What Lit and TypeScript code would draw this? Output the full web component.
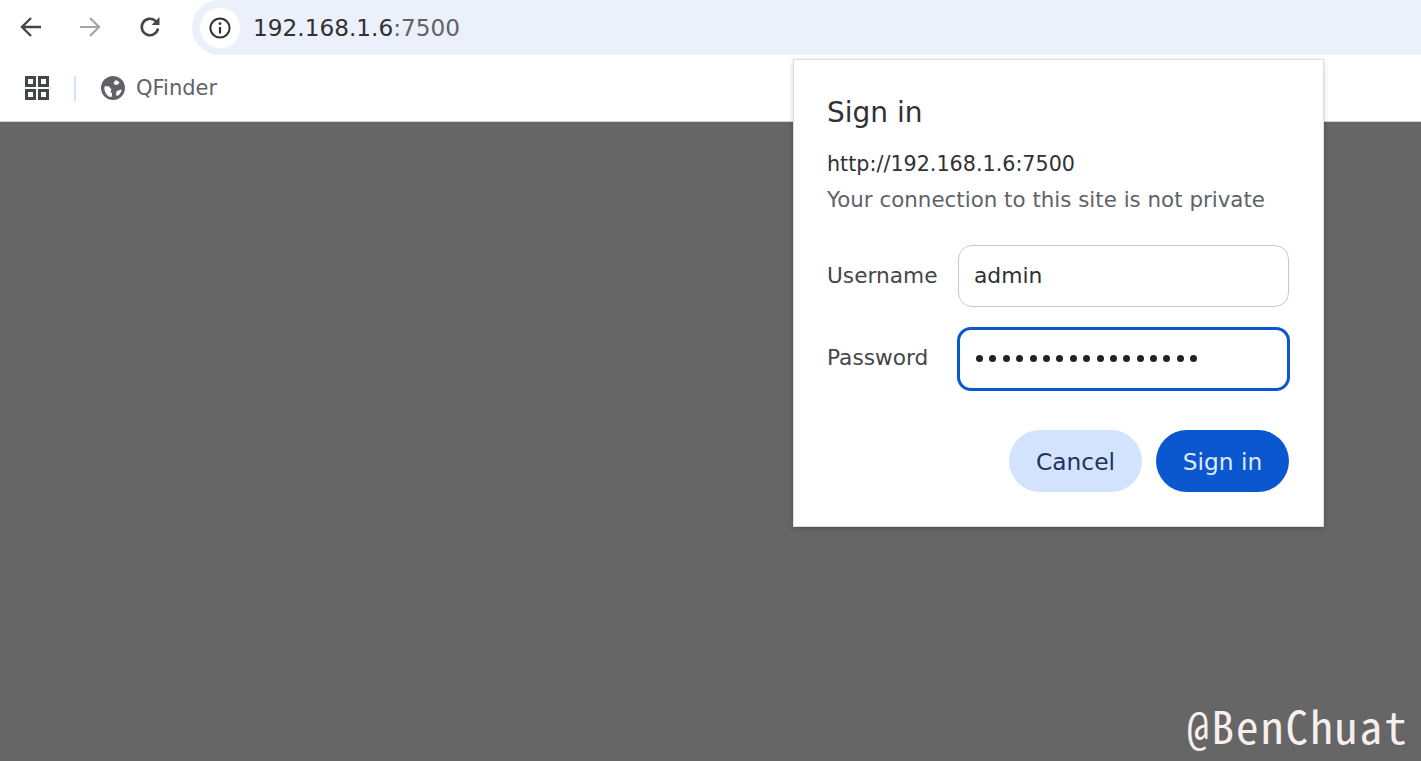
import { LitElement, html, css } from 'lit';
import { customElement } from 'lit/decorators.js';

@customElement('app-root')
export class AppRoot extends LitElement {
  static styles = css`
    :host {
      display: flex;
      flex-direction: column;
      position: relative;
      width: 1421px;
      height: 761px;
      overflow: hidden;
      background: #666666;
      font-family: "DejaVu Sans", sans-serif;
      color: #202124;
    }
    .toolbar {
      display: flex;
      align-items: center;
      height: 55px;
      background: #fff;
      flex: none;
    }
    .nav {
      display: flex;
      width: 192px;
      flex: none;
      padding-left: 1px;
      padding-bottom: 1px;
      box-sizing: border-box;
    }
    .nav-btn {
      width: 59.5px;
      height: 30px;
      display: flex;
      align-items: center;
      justify-content: center;
    }
    .omnibox {
      flex: 1;
      height: 55px;
      display: flex;
      align-items: center;
      gap: 13px;
      padding-left: 8px;
      background: #ebf0fa;
      border-radius: 27px 0 0 27px;
    }
    .info {
      width: 40px;
      height: 40px;
      border-radius: 50%;
      background: #fff;
      display: flex;
      align-items: center;
      justify-content: center;
    }
    .url {
      font-size: 23.2px;
      color: #5f6368;
      padding-bottom: 1px;
    }
    .url b {
      font-weight: 400;
      color: #303134;
    }
    .bookmarks {
      display: flex;
      align-items: center;
      height: 67px;
      background: #fff;
      border-bottom: 1px solid #d4d4d4;
      box-sizing: border-box;
      padding-left: 25px;
      flex: none;
    }
    .divider {
      width: 2px;
      height: 25px;
      margin: 0 25px 0 25px;
      background: #d3e3fd;
    }
    .bookmark {
      display: flex;
      align-items: center;
      gap: 11px;
      font-size: 21px;
      color: #5f6368;
    }
    .dialog {
      position: absolute;
      left: 794px;
      top: 60px;
      width: 529px;
      height: 466px;
      box-sizing: border-box;
      padding: 34px 34px 0 33px;
      background: #fff;
      box-shadow: 0 0 0 1px #dedede, 0 2px 6px rgba(0, 0, 0, 0.25);
    }
    h1 {
      margin: 0;
      font-size: 28px;
      line-height: 37px;
      font-weight: 400;
      color: #303134;
    }
    .origin {
      margin-top: 19px;
      font-size: 20.7px;
      line-height: 28px;
      color: #303134;
    }
    .note {
      margin-top: 8px;
      font-size: 21.4px;
      line-height: 28px;
      color: #5f6368;
    }
    .form {
      display: grid;
      grid-template-columns: 131px 1fr;
      row-gap: 20px;
      align-items: center;
      margin-top: 31px;
    }
    .form label {
      font-size: 21.7px;
      color: #44474a;
      padding-bottom: 2px;
    }
    .field {
      height: 62px;
      box-sizing: border-box;
      display: flex;
      align-items: center;
      padding: 0 0 2px 15px;
      border: 1px solid #c8c8c8;
      border-radius: 14px;
      font-size: 21.8px;
      color: #303134;
    }
    .field.focus {
      height: 64px;
      margin: 0 -1px -1px -1px;
      padding-left: 16px;
      border: 3px solid #0b57d0;
    }
    .dots {
      display: flex;
      gap: 6.4px;
    }
    .dots i {
      width: 7px;
      height: 7px;
      border-radius: 50%;
      background: #202124;
    }
    .actions {
      display: flex;
      justify-content: flex-end;
      gap: 14px;
      margin-top: 40px;
    }
    .btn {
      height: 62px;
      display: flex;
      align-items: center;
      justify-content: center;
      border-radius: 31px;
      font-size: 23.3px;
    }
    .cancel {
      width: 133px;
      background: #d3e3fd;
      color: #1d3461;
    }
    .submit {
      width: 133px;
      background: #0b57d0;
      color: #dfe8fa;
    }
    .watermark {
      position: absolute;
      right: 12px;
      bottom: 4px;
      font-family: "Noto Sans Mono CJK SC", "Noto Sans CJK SC", monospace;
      font-size: 45px;
      font-weight: 300;
      letter-spacing: 2.2px;
      line-height: 64px;
      color: #f6efee;
    }
  `;

  render() {
    return html`
      <div class="toolbar">
        <div class="nav">
          <div class="nav-btn">
            <svg width="24" height="24" viewBox="0 0 24 24" fill="none" stroke="#44474a" stroke-width="2.4">
              <path d="M22 12H3M12 3l-9 9 9 9" />
            </svg>
          </div>
          <div class="nav-btn">
            <svg width="24" height="24" viewBox="0 0 24 24" fill="none" stroke="#a4a6a8" stroke-width="2.2">
              <path d="M2 12h19M12 3l9 9-9 9" />
            </svg>
          </div>
          <div class="nav-btn">
            <svg width="24" height="24" viewBox="0 0 24 24" fill="none" stroke="#44474a" stroke-width="2.6">
              <path d="M20 13.5a8.2 8.2 0 1 1-2.6-7.6L20 8.5" />
              <path d="M21.5 2v8h-8" fill="#44474a" stroke="none" />
            </svg>
          </div>
        </div>
        <div class="omnibox">
          <div class="info">
            <svg width="24" height="24" viewBox="0 0 24 24" fill="none">
              <circle cx="12" cy="12" r="9.6" stroke="#303134" stroke-width="2" />
              <path d="M12 11v6.5" stroke="#303134" stroke-width="2.2" />
              <circle cx="12" cy="7.6" r="1.4" fill="#303134" />
            </svg>
          </div>
          <div class="url"><b>192.168.1.6</b>:7500</div>
        </div>
      </div>
      <div class="bookmarks">
        <svg width="24" height="24" viewBox="0 0 24 24" fill="none" stroke="#44474a" stroke-width="3">
          <rect x="1.5" y="1.5" width="8" height="8" />
          <rect x="14.5" y="1.5" width="8" height="8" />
          <rect x="1.5" y="14.5" width="8" height="8" />
          <rect x="14.5" y="14.5" width="8" height="8" />
        </svg>
        <div class="divider"></div>
        <div class="bookmark">
          <svg width="24" height="24" viewBox="0 0 24 24">
            <circle cx="12" cy="12" r="12" fill="#5f6368" />
            <path d="M4 10l4 .5 2.5 3-1 2 1.5 2v3l-2 .5C6 20 3.5 16 3.3 12zM15 4l3.5 2.2-1.5 2.3-2.5.5-2-1.5 1-2zM16 15l4-1.5.7 1.5-2.7 4-2.5 1-.5-3z" fill="#fff" />
          </svg>
          QFinder
        </div>
      </div>
      <div class="dialog">
        <h1>Sign in</h1>
        <div class="origin">http://192.168.1.6:7500</div>
        <div class="note">Your connection to this site is not private</div>
        <div class="form">
          <label>Username</label>
          <div class="field">admin</div>
          <label>Password</label>
          <div class="field focus">
            <div class="dots">${Array.from({ length: 17 }, () => html`<i></i>`)}</div>
          </div>
        </div>
        <div class="actions">
          <div class="btn cancel">Cancel</div>
          <div class="btn submit">Sign in</div>
        </div>
      </div>
      <div class="watermark">@BenChuat</div>
    `;
  }
}
